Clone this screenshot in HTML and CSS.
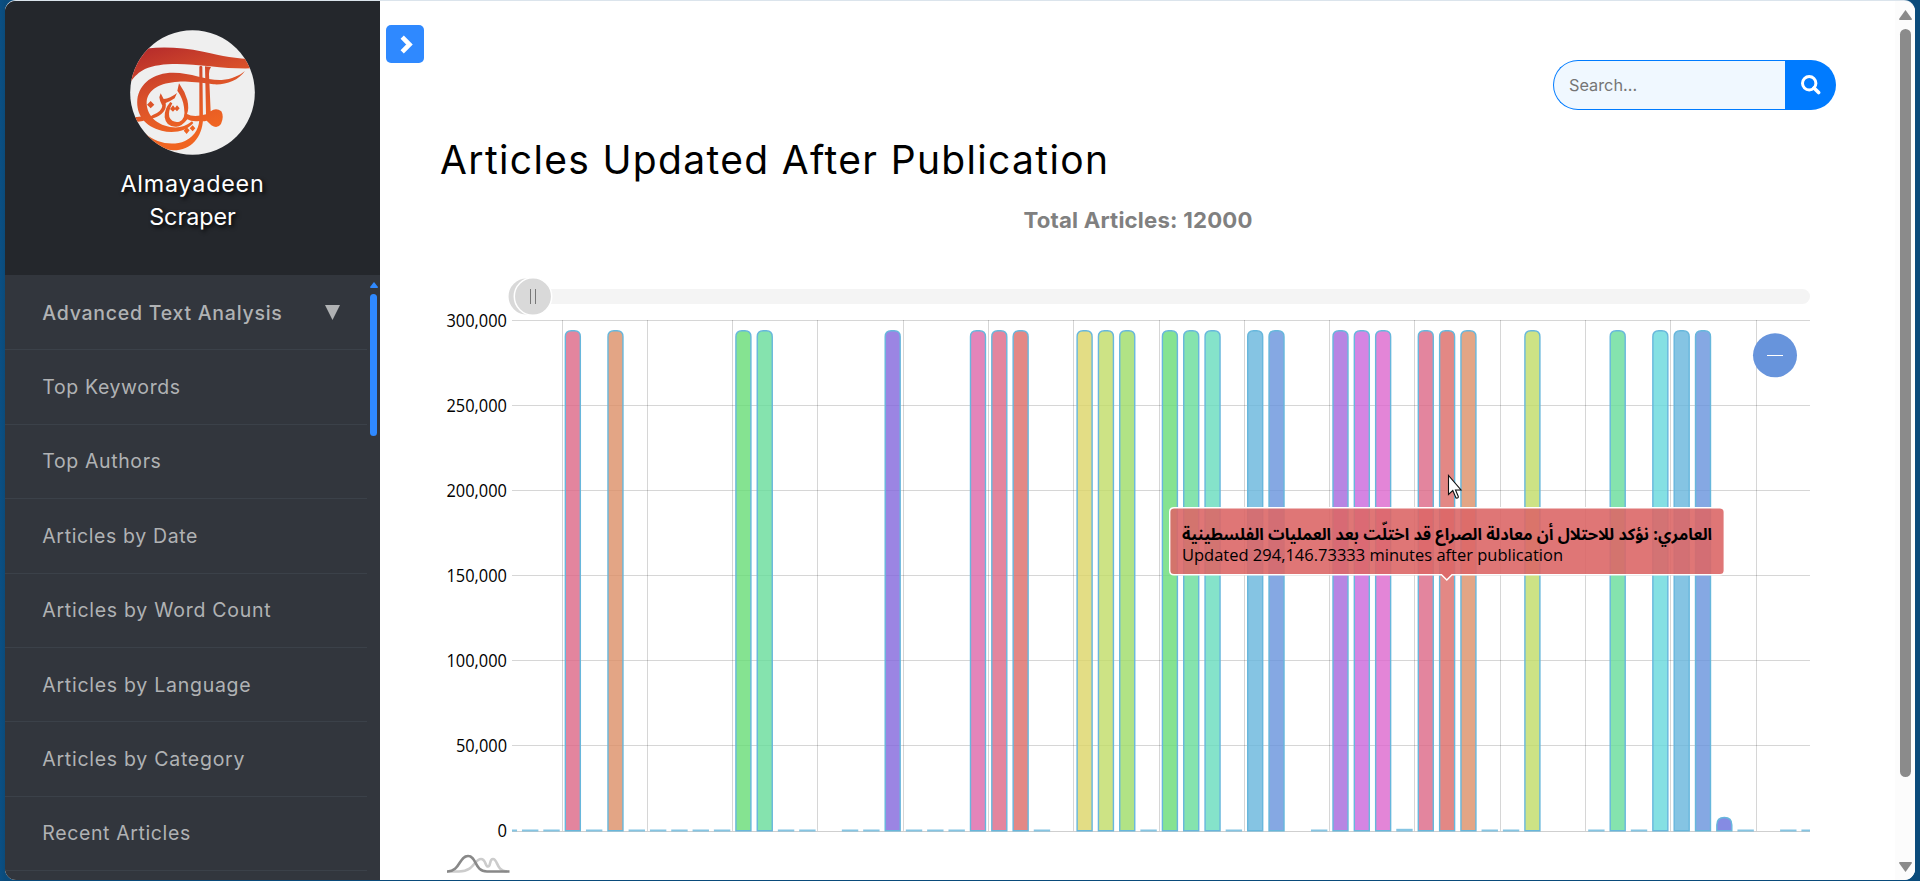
FILE: index.html
```html
<!DOCTYPE html>
<html lang="en">
<head>
<meta charset="utf-8">
<title>Almayadeen Scraper</title>
<link rel="stylesheet" href="styles.css">
</head>
<body>
<div class="window">
  <aside class="sidebar">
    <header class="brand">
      <svg class="brand-logo" viewBox="60 30 375 375" aria-hidden="true">
        <defs>
          <clipPath id="disc"><circle cx="247.500" cy="217.500" r="187"/></clipPath>
          <linearGradient id="ember" gradientUnits="userSpaceOnUse" x1="120" y1="80" x2="210" y2="350">
            <stop offset="0" stop-color="#b62c2b"/><stop offset=".5" stop-color="#d9502a"/><stop offset="1" stop-color="#f06522"/>
          </linearGradient>
        </defs>
        <circle cx="247.500" cy="217.500" r="187" fill="#efefef"/>
        <g clip-path="url(#disc)" fill="url(#ember)">
          <path d="M55 96C130 77 200 80 280 95C340 108 375 116 435 118L435 145C390 146 350 145 300 139C225 130 150 127 105 147C85 157 72 170 55 195Z"/>
          <path d="M405 153C385 182 345 196 310 193C260 187 235 184 205 185C150 188 114 208 110 244C108 282 135 313 180 321C205 325 225 321 246 304L250 309C231 333 190 342 155 332C105 320 78 285 82 238C88 190 130 158 190 158C245 158 290 182 335 180C365 178 390 166 405 153Z"/>
          <path d="M268 140Q273 134 277 140L279 300C276 350 245 391 190 391C150 390 120 370 105 340C140 372 190 378 225 363C258 345 269 320 268 290Z"/>
          <path d="M285 139L303 141Q296 150 297 162L302 274Q318 262 334 274Q343 290 333 312Q322 328 304 316L290 302Q280 305 268 303Q245 306 232 298Q214 322 196 320Q168 320 164 292Q162 268 181 246L187 250Q174 274 178 291Q186 309 208 305Q228 298 222 262Q219 235 202 212L207 190Q225 215 232 240Q238 266 231 282Q250 294 288 283ZM310 283Q321 282 326 292Q326 304 319 307Q307 300 302 290Z"/>
          <path d="M152 220L161 237Q180 236 201 219L194 235Q178 246 167 249Q170 264 160 276Q148 290 132 294L110 297L128 285Q156 274 157 257Q149 244 148 232Z"/>
          <path d="M122 243L133 254L122 265L111 254ZM189 256L197 266L189 275L180 267ZM201 256L209 265L201 274L193 266ZM230 322L239 331L230 342L221 332ZM248 316L256 325L248 334L239 325Z"/>
          <path d="M72 290Q90 293 103 285L112 296Q95 308 73 304Z"/>
        </g>
      </svg>
      <div class="brand-name"><span class="n1">Almayadeen</span><span class="n2">Scraper</span></div>
    </header>
    <div class="menu-area">
      <nav class="menu">
        <a class="menu-item lead"><span class="label">Advanced Text Analysis</span><svg class="caret" viewBox="0 0 15 15"><path d="M0 0H15L7.500 15Z"/></svg></a>
        <a class="menu-item"><span class="label">Top Keywords</span></a>
        <a class="menu-item"><span class="label">Top Authors</span></a>
        <a class="menu-item"><span class="label">Articles by Date</span></a>
        <a class="menu-item"><span class="label wide">Articles by Word Count</span></a>
        <a class="menu-item"><span class="label wide">Articles by Language</span></a>
        <a class="menu-item"><span class="label wide">Articles by Category</span></a>
        <a class="menu-item"><span class="label">Recent Articles</span></a>
      </nav>
      <div class="menu-scroll">
        <svg viewBox="0 0 8 6"><path d="M4 0L8 5Q8 6 7 6H1Q0 6 0 5Z"/></svg>
        <i class="menu-thumb"></i>
      </div>
    </div>
  </aside>

  <main class="main">
    <div class="topbar">
      <button class="toggle" aria-label="Expand"><svg viewBox="0 0 13 19"><path d="M2.200 2.200L9.500 9.500L2.200 16.800" fill="none" stroke="#fff" stroke-width="4.600"/></svg></button>
      <form class="search">
        <input class="search-input" type="text" placeholder="Search...">
        <button class="search-btn" type="button" aria-label="Search"><svg viewBox="0 0 20 20"><circle cx="8.200" cy="8.200" r="6.700" fill="none" stroke="#fff" stroke-width="3"/><path d="M13 13L17.600 17.600" stroke="#fff" stroke-width="3.600" stroke-linecap="round"/></svg></button>
      </form>
    </div>
    <h1 class="title">Articles Updated After Publication</h1>
    <p class="total"><span>Total Articles: 12000</span></p>
    <svg class="chart" viewBox="440 260 1455 620" width="1455" height="620">
      <rect x="508" y="289" width="1302" height="15" rx="7.500" fill="#f4f4f4"/>
      <g fill="#d9d9d9" stroke="#fff" stroke-width="1.500">
        <circle cx="526.500" cy="296.500" r="18.700"/><circle cx="533" cy="296.500" r="18.700"/>
      </g>
      <path d="M530.500 289V304M535.500 289V304" stroke="#777" fill="none"/>
      <path class="grid" d="M512 320.500H1810M512 405.500H1810M512 490.500H1810M512 575.500H1810M512 660.500H1810M512 745.500H1810M562.500 320V831M647.500 320V831M732.500 320V831M817.500 320V831M903.500 320V831M988.500 320V831M1073.500 320V831M1159.500 320V831M1244.500 320V831M1329.500 320V831M1414.500 320V831M1500.500 320V831M1585.500 320V831M1670.500 320V831M1756.500 320V831"/>
      <path d="M512 831.500H1810" stroke="#cfcfcf"/>
      <g class="axis">
        <text x="446.500" y="327" textLength="60.500">300,000</text>
        <text x="446.500" y="412" textLength="60.500">250,000</text>
        <text x="446.500" y="497" textLength="60.500">200,000</text>
        <text x="446.500" y="582" textLength="60.500">150,000</text>
        <text x="446.500" y="667" textLength="60.500">100,000</text>
        <text x="456" y="752" textLength="51">50,000</text>
        <text x="497.500" y="837" textLength="9.500">0</text>
      </g>
      <g id="bars"></g>
      <circle cx="1775" cy="355.300" r="22" fill="#6794dc"/>
      <path d="M1767 355.500H1783" stroke="#fff"/>
      <g fill="none" stroke-width="2.600">
        <path d="M447 871.500H459C475 871 474 859 481 859C486 859 485 866.500 488 866.500C491 866.500 489 859 493 859C498 859 496 871 507 871.500" stroke="#ccc"/>
        <path d="M447 871.500C460 872 459 856 468 856C477 856 474 871.500 487 871.500H509.500" stroke="#888"/>
      </g>
      <path d="M1174 507.700H1720Q1724.300 507.700 1724.300 512V570.500Q1724.300 574.800 1720 574.800H1452L1446.800 580L1441.500 574.800H1174Q1169.700 574.800 1169.700 570.500V512Q1169.700 507.700 1174 507.700Z" fill="#dc6767" fill-opacity=".9" stroke="#fff" stroke-width="1.400"/>
      <text class="tip-title" x="1182" y="539.500" textLength="530">العامري: نؤكد للاحتلال أن معادلة الصراع قد اختلّت بعد العمليات الفلسطينية</text>
      <text class="tip-text" x="1182" y="561" textLength="381">Updated 294,146.73333 minutes after publication</text>
      <path d="M1448.500 475.500V494.500L1452.800 490.500L1456 498Q1458.500 498.500 1458.300 496.500L1455.500 490H1461Z" fill="#fff" stroke="#111" stroke-width="1.100"/>
    </svg>
  </main>
  <div class="page-scroll">
    <svg viewBox="0 0 13 10"><path d="M6.500 0L13 9Q13 10 12 10H1Q0 10 0 9Z"/></svg>
    <i class="page-thumb"></i>
    <svg class="down" viewBox="0 0 13 10"><path d="M6.500 10L13 1Q13 0 12 0H1Q0 0 0 1Z"/></svg>
  </div>
</div>
<script src="chart.js"></script>
</body>
</html>
```
FILE: styles.css
```css
* { box-sizing: border-box; }
body {
  margin: 0;
  height: 881px;
  overflow: hidden;
  padding: 1px 5px 1px;
  background: #0a4b7b;
  background-image: linear-gradient(to right, #0b4f83, #0a4b7b 5px);
  font-family: Inter, "Open Sans", sans-serif;
}
.window {
  display: flex;
  height: 879px;
  border-radius: 11px;
  overflow: hidden;
  background: #fff;
  box-shadow: 0 -1px 0 #dbe4ec;
}
.sidebar {
  width: 375px;
  flex: none;
  display: flex;
  flex-direction: column;
  background: #32363d;
}
.brand {
  height: 274px;
  flex: none;
  background: #24272c;
  display: flex;
  flex-direction: column;
  align-items: center;
  padding-top: 29px;
}
.brand-logo { width: 125px; height: 125px; display: block; }
.brand-name {
  display: flex;
  flex-direction: column;
  align-items: center;
  margin-top: 12px;
  font-size: 23.300px;
  line-height: 33px;
  color: #fff;
  text-shadow: 2px 2px 4px #000;
}
.n1 { letter-spacing: .8px; }
.menu-area { display: flex; flex: 1; min-height: 0; }
.menu { width: 362px; overflow: hidden; padding-top: 1px; }
.menu-item {
  display: flex;
  align-items: center;
  height: 74.400px;
  padding: 0 27px 0 37.300px;
  border-bottom: 1px solid #3b4149;
  justify-content: space-between;
  font-size: 19.500px;
  letter-spacing: .62px;
  color: #b0b2b4;
  white-space: nowrap;
}
.wide { letter-spacing: .73px; }
.lead { font-weight: 500; letter-spacing: .75px; }
.caret { width: 15px; height: 15px; fill: #b0b2b4; }
.menu-scroll { width: 13px; padding: 7px 0 0 2.500px; }
.menu-scroll svg { width: 8px; height: 6px; display: block; fill: #2f89ff; }
.menu-thumb {
  display: block;
  width: 7px;
  height: 142px;
  margin: 6px 0 0 .500px;
  border-radius: 4px;
  background: #2f89ff;
}
.main { flex: 1; min-width: 0; padding-left: 6px; }
.topbar {
  display: flex;
  justify-content: space-between;
  align-items: flex-start;
  height: 109px;
  padding: 24px 59px 0 0;
}
.toggle {
  width: 38px;
  height: 38px;
  border: 0;
  padding: 0 0 0 2px;
  border-radius: 5px;
  background: #2f89ff;
  display: flex;
  align-items: center;
  justify-content: center;
}
.toggle svg { width: 13px; height: 19px; }
.search { display: flex; margin-top: 35px; width: 283px; height: 50px; }
.search-input {
  width: 232px;
  border: 1px solid #007bff;
  border-right: 0;
  border-radius: 25px 0 0 25px;
  background: #f0f8ff;
  padding: 0 0 0 15px;
  font: 16.300px Inter, sans-serif;
  outline: 0;
}
.search-input::placeholder { color: #757575; }
.search-btn {
  width: 51px;
  border: 0;
  padding: 0;
  border-radius: 0 25px 25px 0;
  background: #007bff;
  display: flex;
  align-items: center;
  justify-content: center;
}
.search-btn svg { width: 20px; height: 20px; }
.title {
  margin: 0 0 0 54px;
  height: 100px;
  line-height: 100px;
  font-weight: 400;
  font-size: 39px;
  letter-spacing: 1.340px;
  color: #000;
  white-space: nowrap;
}
.total {
  margin: -7px 0 0 0;
  padding-right: 5px;
  height: 33px;
  line-height: 33px;
  text-align: center;
  font-weight: 700;
  font-size: 22.200px;
  letter-spacing: .2px;
  color: #808080;
}
.chart {
  display: block;
  margin: 24px 0 0 54px;
  font-family: "Open Sans", "Noto Sans", sans-serif;
}
.grid { fill: none; stroke: #000; stroke-opacity: .16; }
.axis text { font-size: 17.600px; fill: #000; }
.tip-title { font-weight: 700; font-size: 16.500px; font-family: "Noto Sans Arabic", "DejaVu Sans", sans-serif; }
.tip-text { font-size: 16.800px; }
.bar { stroke: #67b7dc; stroke-width: 1.400; fill-opacity: .8; }
.flat { fill: #67b7dc; fill-opacity: .8; }
.page-scroll {
  width: 20px;
  flex: none;
  background: #fcfcfc;
  display: flex;
  flex-direction: column;
  align-items: center;
  padding: 9px 0 8px 0;
}
.page-scroll svg { width: 13px; height: 10px; fill: #8b8b8b; flex: none; }
.page-scroll .down { margin-top: auto; }
.page-thumb { width: 11px; height: 748px; margin-top: 9px; border-radius: 6px; background: #8b8b8b; }
```
FILE: chart.js
```js
// Minutes-after-publication columns, indexed by category slot.
const full = [0, 2, 8, 9, 15, 19, 20, 21, 24, 25, 26, 28, 29, 30, 32, 33, 36, 37, 38, 40, 41, 42, 45, 49, 51, 52, 53];
const empty = [12, 23, 34, 46, 47, 56];
const bars = document.getElementById('bars');
let out = '';
for (let i = -3; i <= 58; i++) {
  if (empty.includes(i)) continue;
  const left = 572.83 + 21.324 * i - 7.5;
  const tall = full.includes(i);
  if (tall || i === 54) {
    const top = tall ? 330.8 : 817.5;
    const r = tall ? 6 : 7.5;
    const hue = (218 + 18 * (i - 33) + 720) % 360;
    out += `<path class="bar" fill="hsl(${hue},63%,63.300%)" d="M${left} 830.8V${top + r}q0 ${-r} ${r} ${-r}h${15 - 2 * r}q${r} 0 ${r} ${r}V830.8Z"/>`;
  } else {
    const x = Math.max(512, left - 0.7);
    const end = Math.min(1810, left + 15.7);
    const h = i === 39 ? 2.7 : 2;
    out += `<rect class="flat" x="${x}" y="${831.5 - h}" width="${end - x}" height="${h}"/>`;
  }
}
bars.innerHTML = out;
document.querySelectorAll('.chart text').forEach(t => t.setAttribute('lengthAdjust', 'spacingAndGlyphs'));
```
